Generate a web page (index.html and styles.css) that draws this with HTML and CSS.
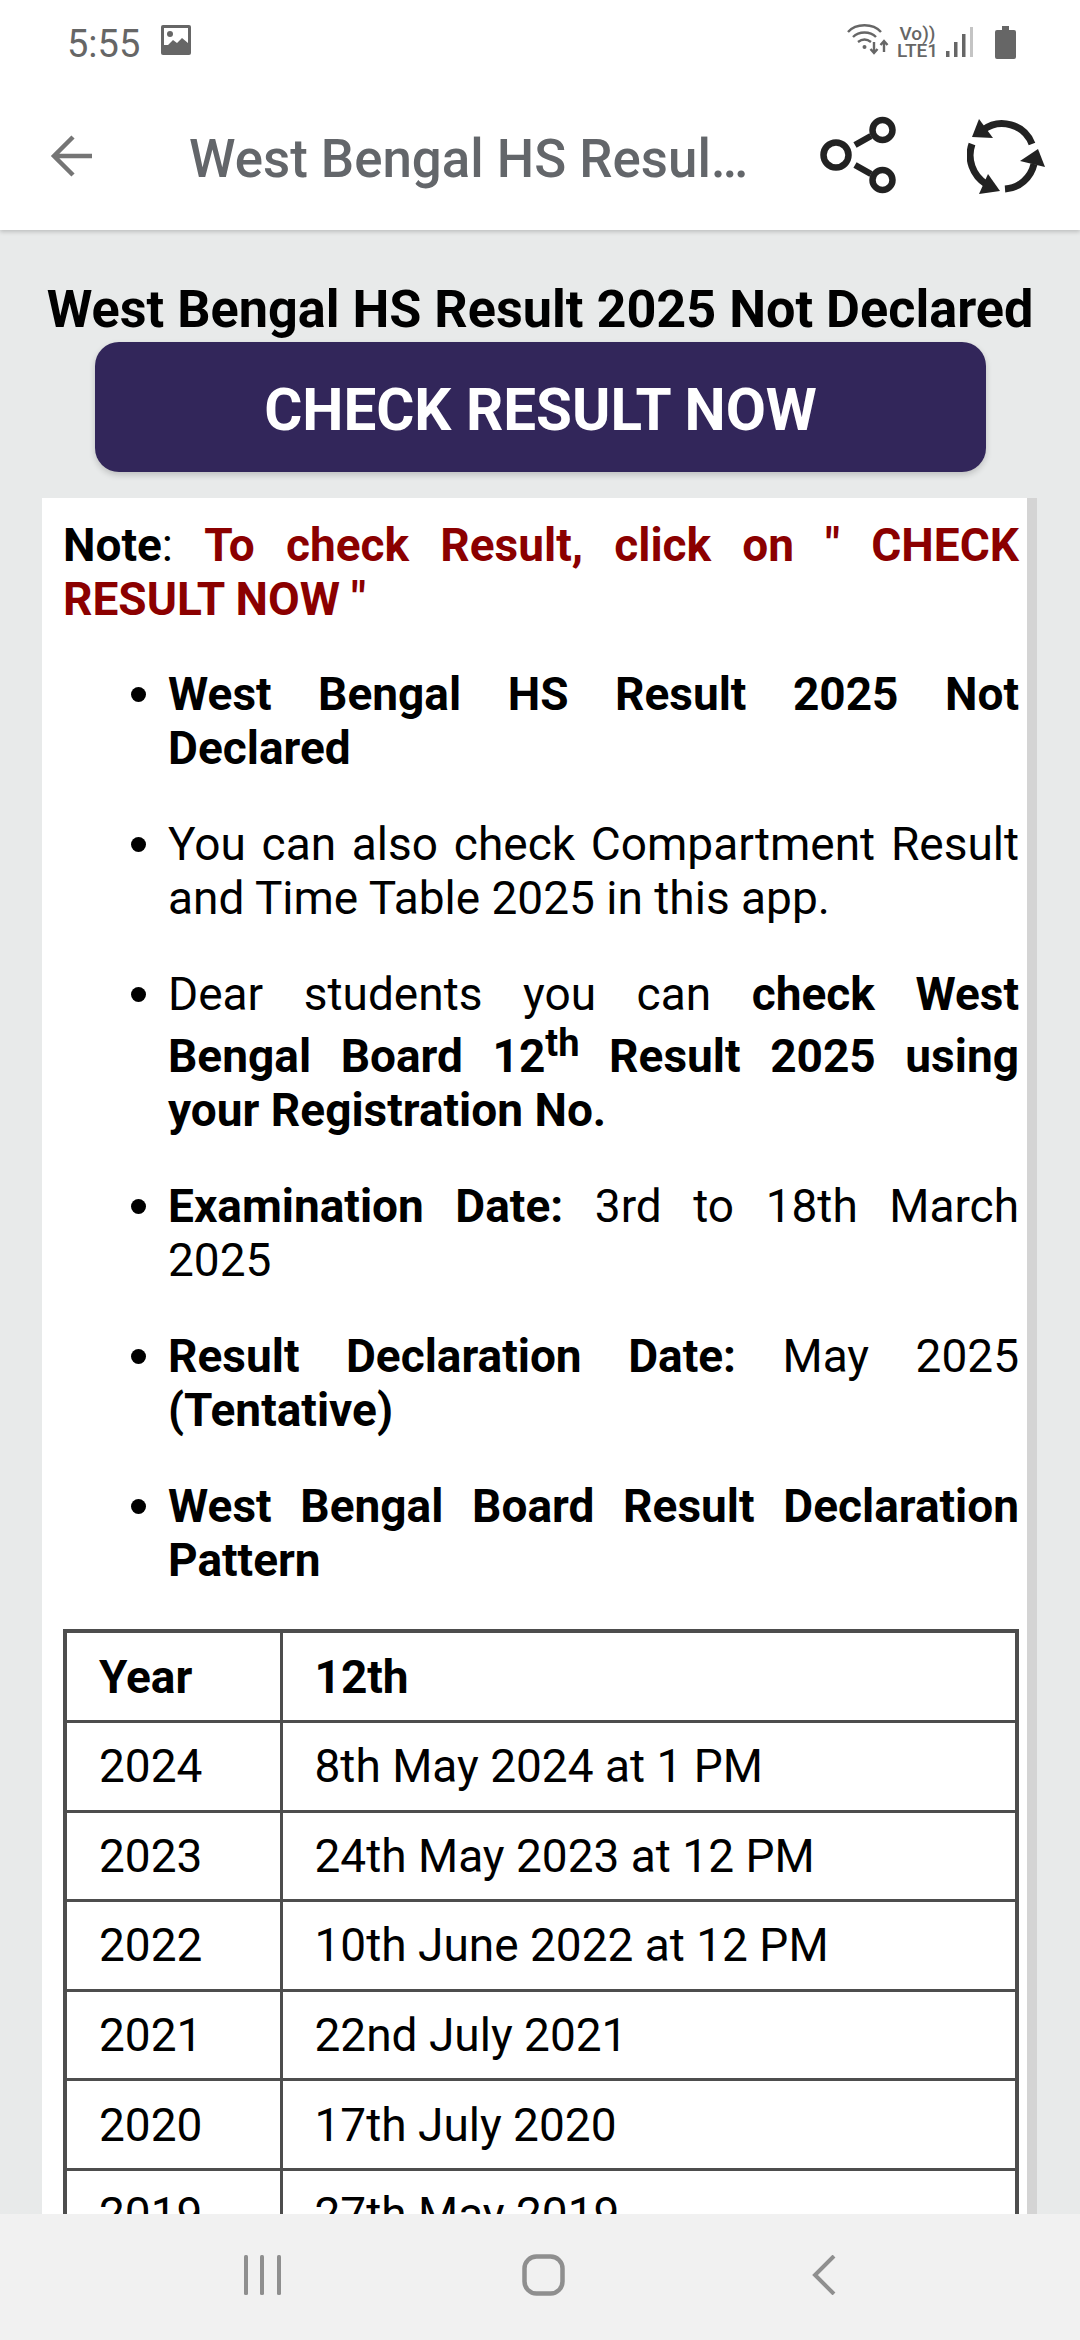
FILE: index.html
```html
<!DOCTYPE html>
<html lang="en">
<head>
<meta charset="utf-8">
<title>West Bengal HS Result</title>
<link rel="stylesheet" href="styles.css">
</head>
<body>
<div class="screen">
  <header class="top">
    <div class="status">
      <span class="time">5:55</span>
      <svg class="pic" width="30" height="30" viewBox="0 0 30 30"><rect width="30" height="30" rx="2" fill="#666"/><rect x="3" y="3" width="24" height="17" fill="#fff"/><circle cx="9" cy="9" r="3" fill="#666"/><path d="M3 24 12 15l4 3 5-5 6 5v8H3z" fill="#666"/></svg>
      <span class="status-space"></span>
      <svg class="wifi" width="42" height="34" viewBox="0 0 42 34" fill="none" stroke="#666" stroke-width="2.4"><path d="M1 9C9 0 26 0 34 9"/><path d="M6 14c6-6 17-6 23 0"/><path d="M11 19c4-3 9-3 13 0"/><circle cx="17.500" cy="24" r="2" fill="#666" stroke="none"/><path d="M27 19v11M23.500 26l3.500 4 3.500-4M37 29V18M33.500 22l3.500-4 3.500 4"/></svg>
      <span class="net"><span>Vo))</span><span>LTE1</span></span>
      <svg class="bars" width="27" height="30" viewBox="0 0 27 30"><rect x="0" y="24" width="3.500" height="6" fill="#666"/><rect x="8" y="15" width="3.500" height="15" fill="#666"/><rect x="16" y="7" width="3.500" height="23" fill="#666"/><rect x="24" y="0" width="3" height="30" fill="#c4c4c4"/></svg>
      <svg class="batt" width="21" height="33" viewBox="0 0 21 33"><path d="M7 0h7v4h5a2 2 0 0 1 2 2v25a2 2 0 0 1-2 2H2a2 2 0 0 1-2-2V6a2 2 0 0 1 2-2h5z" fill="#666"/></svg>
    </div>
    <div class="bar">
      <svg class="back" width="46" height="44" viewBox="0 0 46 44" fill="none" stroke="#757575" stroke-width="4.500"><path d="M44 22H6M25 3 6 22l19 19"/></svg>
      <h1 class="title">West Bengal HS Resul…</h1>
      <svg class="share" width="78" height="82" viewBox="0 0 78 82" fill="none" stroke="#222" stroke-width="6.500"><circle cx="17" cy="40" r="12.500"/><circle cx="63.500" cy="15" r="10"/><circle cx="63.500" cy="65" r="10"/><path d="M36 30 52 21M36 50l16 9"/></svg>
      <svg class="sync" width="80" height="80" viewBox="0 0 80 80" fill="none"><g stroke="#222" stroke-width="7"><path d="M16 13A32 32 0 0 1 65 27"/><path d="M67 47A32 32 0 0 1 38 72"/><path d="M5 27A34 34 0 0 0 19 67"/></g><g fill="#222"><path d="M12 2 5 20l21 1z"/><path d="M71 32 53 44l25 6z"/><path d="M21 57 33 74 12 77z"/></g></svg>
    </div>
  </header>
  <main class="content">
    <h2 class="headline">West Bengal HS Result 2025 Not Declared</h2>
    <div class="btn">CHECK RESULT NOW</div>
    <article class="card">
      <p class="note"><b>Note</b>: <b class="red">To check Result, click on " CHECK RESULT NOW "</b></p>
      <ul class="list">
        <li><b>West Bengal HS Result 2025 Not Declared</b></li>
        <li>You can also check Compartment Result and Time Table 2025 in this app.</li>
        <li>Dear students you can <b>check West Bengal Board 12<sup>th</sup> Result 2025 using your Registration No.</b></li>
        <li><b>Examination Date:</b> 3rd to 18th March 2025</li>
        <li><b>Result Declaration Date:</b> May 2025 <b>(Tentative)</b></li>
        <li><b>West Bengal Board Result Declaration Pattern</b></li>
      </ul>
      <table class="dates">
        <tr><th class="year">Year</th><th>12th</th></tr>
        <tr><td>2024</td><td>8th May 2024 at 1 PM</td></tr>
        <tr><td>2023</td><td>24th May 2023 at 12 PM</td></tr>
        <tr><td>2022</td><td>10th June 2022 at 12 PM</td></tr>
        <tr><td>2021</td><td>22nd July 2021</td></tr>
        <tr><td>2020</td><td>17th July 2020</td></tr>
        <tr><td>2019</td><td>27th May 2019</td></tr>
      </table>
    </article>
  </main>
  <nav class="nav">
    <svg width="37" height="40" viewBox="0 0 37 40" fill="#8f8f8f"><rect x="0" width="4" height="40" rx="1.500"/><rect x="16" width="4" height="40" rx="1.500"/><rect x="33" width="4" height="40" rx="1.500"/></svg>
    <svg class="home" width="43" height="42" viewBox="0 0 43 42" fill="none" stroke="#8f8f8f" stroke-width="4.500"><rect x="2.500" y="2.500" width="38" height="37" rx="12"/></svg>
    <svg width="24" height="40" viewBox="0 0 24 40" fill="none" stroke="#8f8f8f" stroke-width="4"><path d="M22 1 3 20l19 19"/></svg>
  </nav>
</div>
</body>
</html>
```
FILE: styles.css
```css
* { box-sizing: border-box; }
html, body { margin: 0; padding: 0; }
body { font-family: Roboto, "Liberation Sans", sans-serif; color: #000; }
.screen { width: 1080px; height: 2340px; display: flex; flex-direction: column; overflow: hidden; background: #e8eaea; }
.top { height: 230px; background: #fff; box-shadow: 0 2px 4px rgba(0,0,0,.18); position: relative; z-index: 1; flex: none; }
.status { height: 84px; display: flex; align-items: center; padding: 0 64px 0 67px; }
.time { font-size: 38px; color: #666; line-height: 84px; margin-top: 4px; }
.pic { margin-left: 21px; margin-bottom: 4px; }
.status-space { flex: 1; }
.wifi { margin: 0 0 4px 0; }
.net { display: flex; flex-direction: column; align-items: center; font-size: 19px; line-height: 17px; font-weight: 500; color: #666; margin: 0 8px 0 8px; }
.bars { margin-bottom: 0; }
.batt { margin-left: 22px; }
.bar { height: 146px; display: flex; align-items: center; padding-left: 48px; }
.back { flex: none; margin-top: -2px; }
.title { margin: 0 0 0 95px; width: 569px; font-size: 52.800px; font-weight: 500; color: #63666a; white-space: nowrap; overflow: hidden; line-height: 62px; padding-top: 4px; }
.share { flex: none; margin: -2px 0 0 61px; }
.sync { flex: none; margin-left: 70px; }
.content { flex: 1; min-height: 0; overflow: hidden; padding: 52px 42px 0; }
.headline { margin: 0; font-size: 52.200px; font-weight: 700; line-height: 56px; text-align: center; white-space: nowrap; }
.btn { margin: 4px 0 0 53px; height: 130px; padding-top: 6px; background: #32265a; color: #fff; border-radius: 24px; font-size: 58.300px; font-weight: 700; display: flex; align-items: center; justify-content: center; box-shadow: 0 3px 6px rgba(0,0,0,.18); width: 891px; }
.card { margin-top: 26px; width: 995px; background: #fff; border-right: 10px solid #d4d4d4; padding: 20px 8px 0 21px; font-size: 46px; line-height: 54px; text-align: justify; }
.note { margin: 0; }
.red { color: #8b0000; }
.list { margin: 41px 0 0; padding: 0 0 0 105px; }
.list li { margin-bottom: 42px; }
.list li::marker { font-size: 48px; }
.list sup { font-size: 38px; line-height: 45px; }
.dates { width: 100%; border-collapse: collapse; border: 4px solid #4d4d4d; text-align: left; margin-top: 1px; }
.dates th, .dates td { border: 3px solid #4d4d4d; padding: 16.300px 32px; font-size: 46px; line-height: 54px; font-weight: 400; }
.dates th { font-weight: 700; }
.dates .year { width: 216px; }
.nav { height: 126px; background: #f1f1f1; flex: none; display: flex; align-items: center; padding: 0 244px 4px 244px; justify-content: space-between; position: relative; z-index: 1; }
.home { margin-right: 6px; }
```
